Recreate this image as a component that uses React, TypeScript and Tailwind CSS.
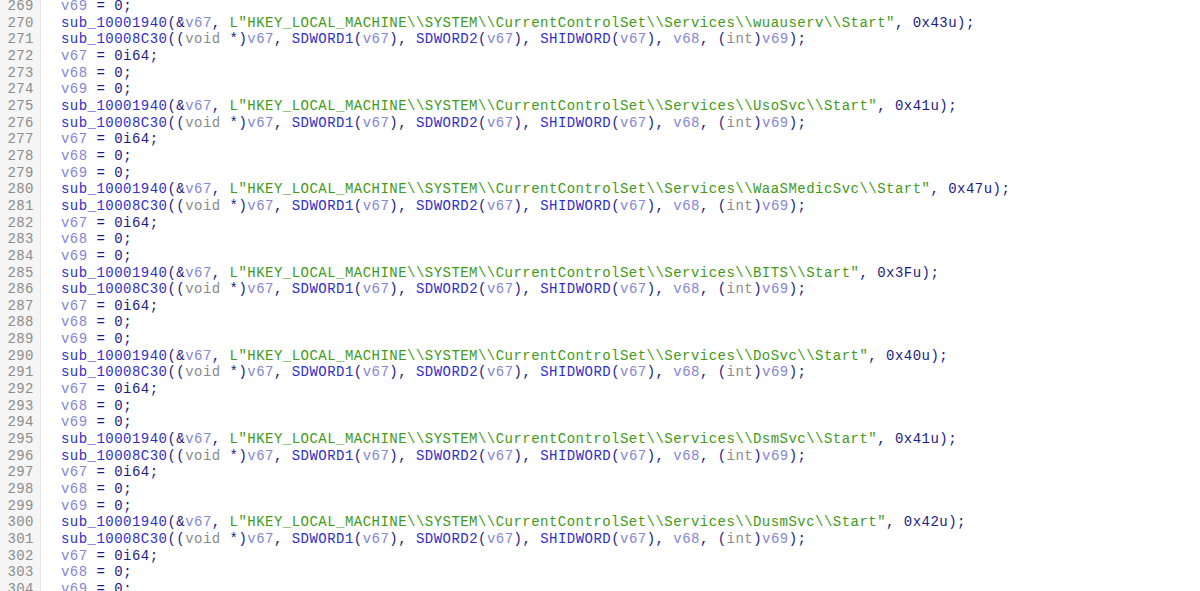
import React from 'react';

const services: [string, string][] = [
  ['wuauserv', '0x43u'],
  ['UsoSvc', '0x41u'],
  ['WaaSMedicSvc', '0x47u'],
  ['BITS', '0x3Fu'],
  ['DoSvc', '0x40u'],
  ['DsmSvc', '0x41u'],
  ['DusmSvc', '0x42u'],
];

const Fn = ({ children }: { children: React.ReactNode }) => <span className="text-[#2f2fcc]">{children}</span>;
const V = ({ children }: { children: React.ReactNode }) => <span className="text-[#8585d6]">{children}</span>;
const Kw = ({ children }: { children: React.ReactNode }) => <span className="text-[#8a8a8a]">{children}</span>;
const Str = ({ children }: { children: React.ReactNode }) => <span className="text-[#3f9a17]">{children}</span>;

function assign(name: string, value: string) {
  return (
    <>
      <V>{name}</V> = {value};
    </>
  );
}

function buildLines() {
  const lines: React.ReactNode[] = [assign('v69', '0')];
  services.forEach(([svc, code]) => {
    const path = `L"HKEY_LOCAL_MACHINE\\\\SYSTEM\\\\CurrentControlSet\\\\Services\\\\${svc}\\\\Start"`;
    lines.push(
      <>
        <Fn>sub_10001940</Fn>(&amp;<V>v67</V>, <Str>{path}</Str>, {code});
      </>
    );
    lines.push(
      <>
        <Fn>sub_10008C30</Fn>((<Kw>void</Kw> *)<V>v67</V>, <Fn>SDWORD1</Fn>(<V>v67</V>), <Fn>SDWORD2</Fn>(<V>v67</V>), <Fn>SHIDWORD</Fn>(<V>v67</V>), <V>v68</V>, (<Kw>int</Kw>)<V>v69</V>);
      </>
    );
    lines.push(assign('v67', '0i64'));
    lines.push(assign('v68', '0'));
    lines.push(assign('v69', '0'));
  });
  return lines.slice(0, 36);
}

export default function App() {
  const lines = buildLines();
  return (
    <div className="w-[1200px] h-[591px] overflow-hidden bg-white font-['Liberation_Mono',monospace] text-[14px] tracking-[0.47px] leading-[16.67px] text-[#1b1b86]">
      <div className="mt-[-2px]">
        {lines.map((line, i) => (
          <div key={i} className="flex h-[16.67px] whitespace-pre">
            <div className="w-[41px] shrink-0 bg-[#f5f5f5] border-r border-[#e4e4e4] text-right pr-[6px] text-[#8c8c8c]">
              {269 + i}
            </div>
            <div className="pl-[20px]">{line}</div>
          </div>
        ))}
      </div>
    </div>
  );
}
